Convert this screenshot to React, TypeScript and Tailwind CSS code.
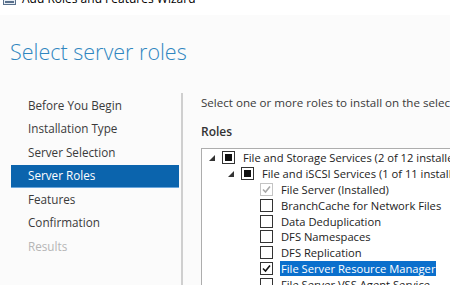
import React from 'react';

const font = { fontFamily: '"Open Sans", "Noto Sans", sans-serif' };

const navItems = [
  { label: 'Before You Begin' },
  { label: 'Installation Type' },
  { label: 'Server Selection' },
  { label: 'Server Roles', active: true },
  { label: 'Features' },
  { label: 'Confirmation' },
  { label: 'Results', disabled: true },
];

type Row = {
  label: string;
  level: number;
  expanded?: boolean;
  state: 'partial' | 'checked' | 'grayed' | 'empty';
  selected?: boolean;
};

const rows: Row[] = [
  { label: 'File and Storage Services (2 of 12 installed)', level: 0, expanded: true, state: 'partial' },
  { label: 'File and iSCSI Services (1 of 11 installed)', level: 1, expanded: true, state: 'partial' },
  { label: 'File Server (Installed)', level: 2, state: 'grayed' },
  { label: 'BranchCache for Network Files', level: 2, state: 'empty' },
  { label: 'Data Deduplication', level: 2, state: 'empty' },
  { label: 'DFS Namespaces', level: 2, state: 'empty' },
  { label: 'DFS Replication', level: 2, state: 'empty' },
  { label: 'File Server Resource Manager', level: 2, state: 'checked', selected: true },
  { label: 'File Server VSS Agent Service', level: 2, state: 'empty' },
];

const Check = ({ color }: { color: string }) => (
  <svg width="11" height="11" viewBox="0 0 11 11">
    <path d="M2 5.5 L4.5 8 L9 2.5" fill="none" stroke={color} strokeWidth="1.6" />
  </svg>
);

const Box = ({ state }: { state: Row['state'] }) => {
  const border = state === 'grayed' ? 'border-[#c4c4c4]' : 'border-[#333333]';
  return (
    <div className={`w-[13px] h-[13px] shrink-0 border bg-white flex items-center justify-center ${border}`}>
      {state === 'partial' && <div className="w-[7px] h-[7px] bg-[#111111]" />}
      {state === 'checked' && <Check color="#111111" />}
      {state === 'grayed' && <Check color="#a8a8a8" />}
    </div>
  );
};

const Arrow = () => (
  <svg width="6" height="6" viewBox="0 0 6 6" className="ml-[1px]">
    <path d="M6 0 L6 6 L0 6 Z" fill="#333333" />
  </svg>
);

export default function App() {
  return (
    <div className="w-[450px] h-[285px] overflow-hidden bg-[#fbfbfb] flex flex-col text-[#3a3a3a]" style={font}>
      <div className="h-[15px] bg-white flex items-start gap-[6px] pl-[3px] overflow-hidden shrink-0">
        <svg width="13" height="13" viewBox="0 0 13 13" className="-mt-[7px] shrink-0">
          <rect x="0.5" y="0.5" width="12" height="11" fill="#e8eef5" stroke="#59708c" />
          <rect x="2" y="8" width="9" height="2" fill="#59708c" />
        </svg>
        <span className="text-[12px] leading-[16px] -mt-[9px] text-black">Add Roles and Features Wizard</span>
      </div>

      <div className="pl-[10px] pt-[22px] h-[78px] shrink-0">
        <h1 className="text-[21.5px] leading-[30px] font-light text-[#2f86c0]">Select server roles</h1>
      </div>

      <div className="flex flex-1 min-h-0">
        <div className="w-[181px] shrink-0 pt-[1px]">
          {navItems.map((it) => (
            <div
              key={it.label}
              className={`ml-[11px] w-[168px] h-[23.5px] flex items-center pl-[17px] text-[11.7px] ${
                it.active
                  ? 'bg-[#0b64ad] text-white border-b border-[#6aa6dc]'
                  : it.disabled
                  ? 'text-[#b5b5b5]'
                  : 'text-[#3a3a3a]'
              }`}
            >
              {it.label}
            </div>
          ))}
        </div>

        <div className="w-[2px] bg-[#cfcfcf] shrink-0" />

        <div className="flex-1 min-w-0 pl-[18px]">
          <div className="h-[18px] mt-[1px] flex items-center text-[11.6px] whitespace-nowrap">
            Select one or more roles to install on the selected server.
          </div>
          <div className="h-[18px] mt-[11px] flex items-center text-[12px] font-semibold text-[#333333]">Roles</div>
          <div className="mt-[7px] border-l border-t border-[#adadad] bg-white pt-[1px] w-[400px]">
            {rows.map((r) => (
              <div
                key={r.label}
                className="h-[15.8px] flex items-center whitespace-nowrap text-[11.2px] text-[#222222]"
                style={{ paddingLeft: 6 + r.level * 19 }}
              >
                <div className="w-[14px] shrink-0 flex items-center">{r.expanded && <Arrow />}</div>
                <Box state={r.state} />
                <span
                  className={`ml-[7px] px-[1px] leading-[15px] ${r.selected ? 'bg-[#0a6fcc] text-white' : ''}`}
                >
                  {r.label}
                </span>
              </div>
            ))}
          </div>
        </div>
      </div>
    </div>
  );
}
